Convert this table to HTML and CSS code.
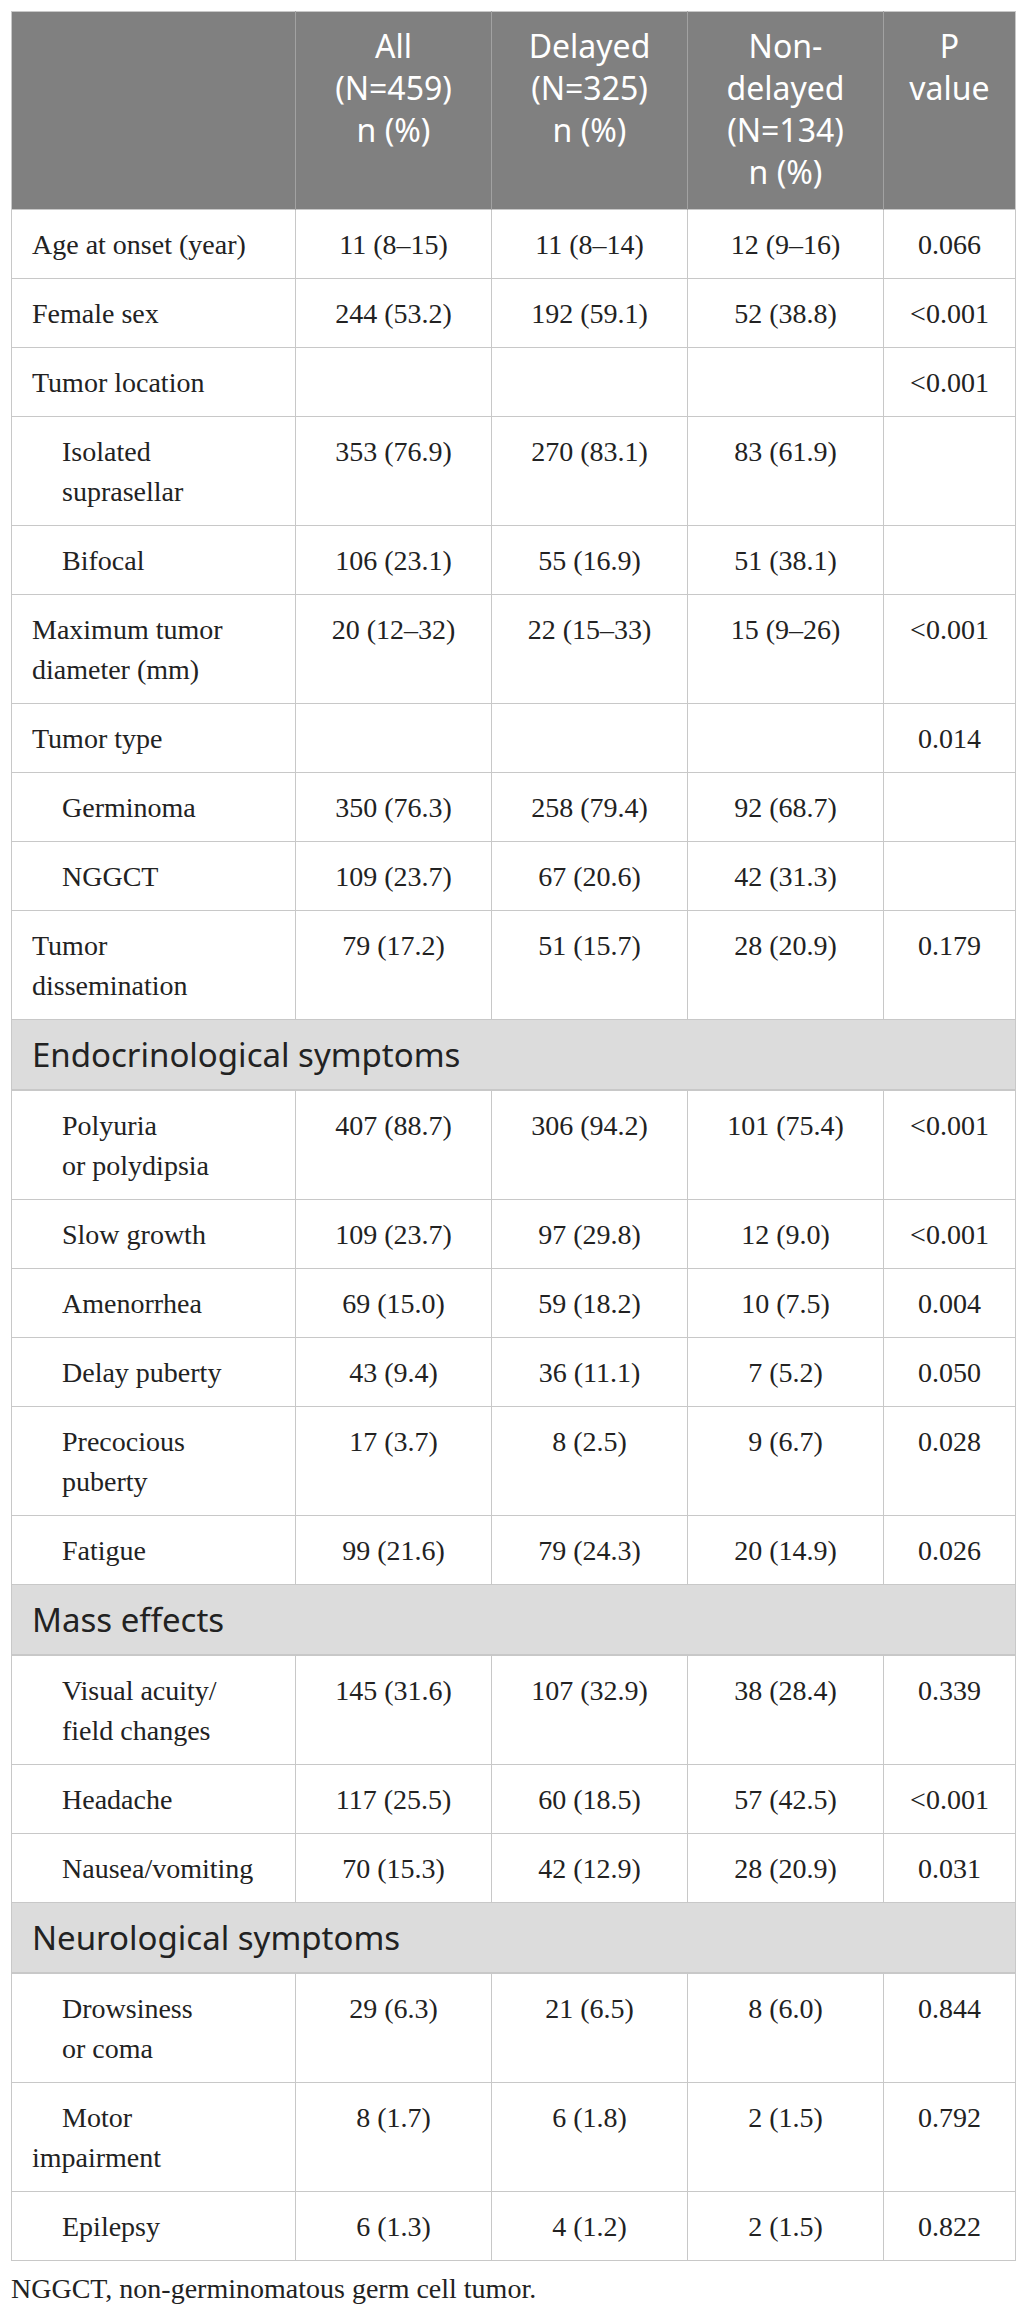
FILE: index.html
```html
<!DOCTYPE html>
<html lang="en">
<head>
  <meta charset="UTF-8" />
  <title>Table - Delayed diagnosis</title>
  <link rel="stylesheet" href="styles.css">
</head>
<body>

  <div class="table-wrap">
    <table class="data">
      <colgroup>
        <col class="c-label">
        <col class="c-num">
        <col class="c-num">
        <col class="c-num">
        <col class="c-p">
      </colgroup>
      <thead>
        <tr>
          <th></th>
          <th>All<br>(N=459)<br>n (%)</th>
          <th>Delayed<br>(N=325)<br>n (%)</th>
          <th>Non-<br>delayed<br>(N=134)<br>n (%)</th>
          <th>P<br>value</th>
        </tr>
      </thead>
      <tbody>
        <tr>
          <td class="label">Age at onset (year)</td>
          <td>11 (8–15)</td><td>11 (8–14)</td><td>12 (9–16)</td><td>0.066</td>
        </tr>
        <tr>
          <td class="label">Female sex</td>
          <td>244 (53.2)</td><td>192 (59.1)</td><td>52 (38.8)</td><td>&lt;0.001</td>
        </tr>
        <tr>
          <td class="label">Tumor location</td>
          <td></td><td></td><td></td><td>&lt;0.001</td>
        </tr>
        <tr>
          <td class="label sub">Isolated<br>suprasellar</td>
          <td>353 (76.9)</td><td>270 (83.1)</td><td>83 (61.9)</td><td></td>
        </tr>
        <tr>
          <td class="label sub">Bifocal</td>
          <td>106 (23.1)</td><td>55 (16.9)</td><td>51 (38.1)</td><td></td>
        </tr>
        <tr>
          <td class="label">Maximum tumor<br>diameter (mm)</td>
          <td>20 (12–32)</td><td>22 (15–33)</td><td>15 (9–26)</td><td>&lt;0.001</td>
        </tr>
        <tr>
          <td class="label">Tumor type</td>
          <td></td><td></td><td></td><td>0.014</td>
        </tr>
        <tr>
          <td class="label sub">Germinoma</td>
          <td>350 (76.3)</td><td>258 (79.4)</td><td>92 (68.7)</td><td></td>
        </tr>
        <tr>
          <td class="label sub">NGGCT</td>
          <td>109 (23.7)</td><td>67 (20.6)</td><td>42 (31.3)</td><td></td>
        </tr>
        <tr>
          <td class="label">Tumor<br>dissemination</td>
          <td>79 (17.2)</td><td>51 (15.7)</td><td>28 (20.9)</td><td>0.179</td>
        </tr>

        <tr class="section">
          <td colspan="5">Endocrinological symptoms</td>
        </tr>
        <tr>
          <td class="label sub">Polyuria<br>or polydipsia</td>
          <td>407 (88.7)</td><td>306 (94.2)</td><td>101 (75.4)</td><td>&lt;0.001</td>
        </tr>
        <tr>
          <td class="label sub">Slow growth</td>
          <td>109 (23.7)</td><td>97 (29.8)</td><td>12 (9.0)</td><td>&lt;0.001</td>
        </tr>
        <tr>
          <td class="label sub">Amenorrhea</td>
          <td>69 (15.0)</td><td>59 (18.2)</td><td>10 (7.5)</td><td>0.004</td>
        </tr>
        <tr>
          <td class="label sub">Delay puberty</td>
          <td>43 (9.4)</td><td>36 (11.1)</td><td>7 (5.2)</td><td>0.050</td>
        </tr>
        <tr>
          <td class="label sub">Precocious<br>puberty</td>
          <td>17 (3.7)</td><td>8 (2.5)</td><td>9 (6.7)</td><td>0.028</td>
        </tr>
        <tr>
          <td class="label sub">Fatigue</td>
          <td>99 (21.6)</td><td>79 (24.3)</td><td>20 (14.9)</td><td>0.026</td>
        </tr>

        <tr class="section">
          <td colspan="5">Mass effects</td>
        </tr>
        <tr>
          <td class="label sub">Visual acuity/<br>field changes</td>
          <td>145 (31.6)</td><td>107 (32.9)</td><td>38 (28.4)</td><td>0.339</td>
        </tr>
        <tr>
          <td class="label sub">Headache</td>
          <td>117 (25.5)</td><td>60 (18.5)</td><td>57 (42.5)</td><td>&lt;0.001</td>
        </tr>
        <tr>
          <td class="label sub">Nausea/vomiting</td>
          <td>70 (15.3)</td><td>42 (12.9)</td><td>28 (20.9)</td><td>0.031</td>
        </tr>

        <tr class="section">
          <td colspan="5">Neurological symptoms</td>
        </tr>
        <tr>
          <td class="label sub">Drowsiness<br>or coma</td>
          <td>29 (6.3)</td><td>21 (6.5)</td><td>8 (6.0)</td><td>0.844</td>
        </tr>
        <tr>
          <td class="label sub-first">Motor<br>impairment</td>
          <td>8 (1.7)</td><td>6 (1.8)</td><td>2 (1.5)</td><td>0.792</td>
        </tr>
        <tr>
          <td class="label sub">Epilepsy</td>
          <td>6 (1.3)</td><td>4 (1.2)</td><td>2 (1.5)</td><td>0.822</td>
        </tr>
      </tbody>
    </table>

    <p class="note">NGGCT, non-germinomatous germ cell tumor.</p>
  </div>

</body>
</html>
```

FILE: styles.css
```css
* {
  box-sizing: border-box;
  margin: 0;
  padding: 0;
}

body {
  background: #fff;
  padding: 11px;
  font-family: 'Liberation Serif', 'Times New Roman', serif;
  color: #222;
}

.table-wrap {
  width: 1004px;
}

.data {
  width: 1004px;
  border-collapse: collapse;
  table-layout: fixed;
  border: 1px solid #c8c8c8;
}

.c-label { width: 284px; }
.c-num { width: 196px; }
.c-p { width: 132px; }

.data th {
  background-color: #808080;
  color: #fff;
  font-family: 'Noto Sans', 'Open Sans', sans-serif;
  font-weight: normal;
  font-size: 32px;
  line-height: 42px;
  text-align: center;
  vertical-align: top;
  padding: 13px 6px 16px;
  border-left: 1px solid #a2a2a2;
}

.data th:first-child {
  border-left: none;
}

.data td {
  font-size: 28px;
  line-height: 40px;
  text-align: center;
  vertical-align: top;
  padding: 15px 10px 13px;
  border: 1px solid #c8c8c8;
}

.data td.label {
  text-align: left;
  padding-left: 20px;
}

.data td.sub {
  padding-left: 50px;
}

.data td.sub-first {
  text-indent: 30px;
}

.section td {
  background-color: #dcdcdc;
  font-family: 'Noto Sans', 'Open Sans', sans-serif;
  font-size: 33px;
  text-align: left;
  padding: 15px 20px 14px;
  border-bottom: 2px solid #c8c8c8;
}

.note {
  margin-top: 8px;
  font-size: 28px;
  line-height: 40px;
}
```
